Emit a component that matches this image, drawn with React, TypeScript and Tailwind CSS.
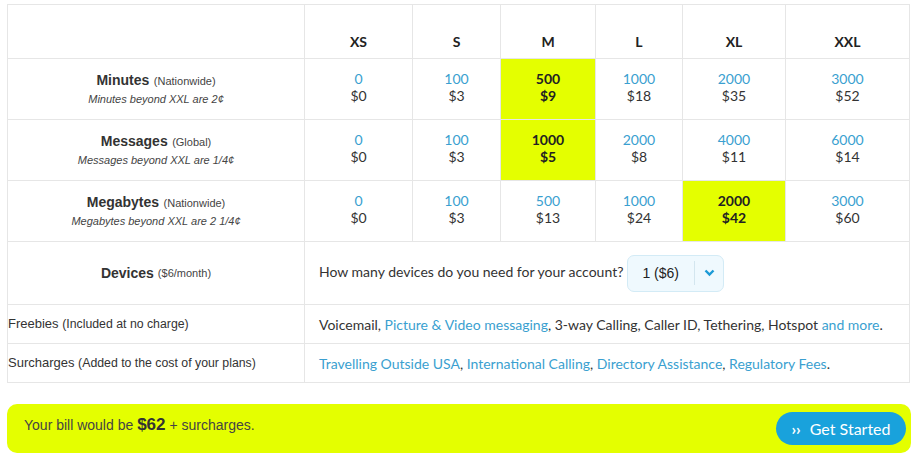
import React from "react";

const SIZES = ["XS", "S", "M", "L", "XL", "XXL"];

type Cell = { qty: string; price: string; on?: boolean };

const ROWS: { label: string; note: string; sub: string; cells: Cell[] }[] = [
  {
    label: "Minutes",
    note: "(Nationwide)",
    sub: "Minutes beyond XXL are 2¢",
    cells: [
      { qty: "0", price: "$0" },
      { qty: "100", price: "$3" },
      { qty: "500", price: "$9", on: true },
      { qty: "1000", price: "$18" },
      { qty: "2000", price: "$35" },
      { qty: "3000", price: "$52" },
    ],
  },
  {
    label: "Messages",
    note: "(Global)",
    sub: "Messages beyond XXL are 1/4¢",
    cells: [
      { qty: "0", price: "$0" },
      { qty: "100", price: "$3" },
      { qty: "1000", price: "$5", on: true },
      { qty: "2000", price: "$8" },
      { qty: "4000", price: "$11" },
      { qty: "6000", price: "$14" },
    ],
  },
  {
    label: "Megabytes",
    note: "(Nationwide)",
    sub: "Megabytes beyond XXL are 2 1/4¢",
    cells: [
      { qty: "0", price: "$0" },
      { qty: "100", price: "$3" },
      { qty: "500", price: "$13" },
      { qty: "1000", price: "$24" },
      { qty: "2000", price: "$42", on: true },
      { qty: "3000", price: "$60" },
    ],
  },
];

const proxima = "font-['Lato','Open_Sans',sans-serif]";
const arial = "font-['Liberation_Sans',Arial,sans-serif]";
const link = "text-[#3a9fd0]";

export default function App() {
  return (
    <div className={`w-[916px] h-[457px] bg-white pl-[7px] pt-[4px] text-[#333] ${arial}`}>
      <div className="w-[903px] border border-[#e6e6e6]">
        <div className="grid grid-cols-[297px_108px_88px_95px_87px_103px_1fr]">
          {/* header row */}
          <div className="h-[54px] border-b border-r border-[#e6e6e6]" />
          {SIZES.map((s, i) => (
            <div
              key={s}
              className={`h-[54px] flex items-end justify-center pb-[6px] border-b border-[#e6e6e6] ${i < 5 ? "border-r" : ""} ${proxima} font-bold text-[14px] text-[#222]`}
            >
              {s}
            </div>
          ))}

          {ROWS.map((row) => (
            <React.Fragment key={row.label}>
              <div className="h-[61px] flex flex-col items-center justify-center border-b border-r border-[#e6e6e6]">
                <div className="leading-[18px]">
                  <span className="font-bold text-[14px] text-[#333]">{row.label}</span>{" "}
                  <span className="text-[11px] text-[#444]">{row.note}</span>
                </div>
                <div className="italic text-[11px] text-[#444] leading-[18px]">{row.sub}</div>
              </div>
              {row.cells.map((c, i) => (
                <div
                  key={i}
                  className={`h-[61px] flex flex-col items-center justify-center pb-[4px] border-b border-[#e6e6e6] ${i < 5 ? "border-r" : ""} ${proxima} text-[14px] leading-[17px] ${c.on ? "bg-[#e4ff00] font-bold text-[#222]" : ""}`}
                >
                  <span className={c.on ? "" : link}>{c.qty}</span>
                  <span>{c.price}</span>
                </div>
              ))}
            </React.Fragment>
          ))}

          {/* devices */}
          <div className="h-[63px] flex items-center justify-center border-b border-r border-[#e6e6e6]">
            <span className="font-bold text-[14px]">Devices</span>
            <span className="text-[11px] text-[#444] ml-[4px]">($6/month)</span>
          </div>
          <div className={`col-span-6 h-[63px] flex items-center pl-[14px] border-b border-[#e6e6e6] ${proxima} text-[14px]`}>
            <span className="-mt-[3px]">How many devices do you need for your account?</span>
            <div className={`ml-[4px] w-[97px] h-[37px] flex items-center rounded-[7px] border border-[#d3ebf6] bg-[#eff9fe] ${arial}`}>
              <span className="flex-1 pl-[14px] text-[14px] text-[#222]">1 ($6)</span>
              <div className="w-[29px] h-[24px] border-l border-[#d3e6ef] flex items-center justify-center">
                <svg width="11" height="8" viewBox="0 0 11 8">
                  <path d="M1.5 1.5 L5.5 5.5 L9.5 1.5" fill="none" stroke="#1b9ad6" strokeWidth="2.4" />
                </svg>
              </div>
            </div>
          </div>

          {/* freebies */}
          <div className="h-[39px] flex items-center border-b border-r border-[#e6e6e6] text-[13px]">
            Freebies&nbsp;<span className="text-[12.3px]">(Included at no charge)</span>
          </div>
          <div className={`col-span-6 h-[39px] flex items-center pl-[14px] border-b border-[#e6e6e6] ${proxima} text-[14px]`}>
            <span>
              Voicemail, <span className={link}>Picture &amp; Video messaging</span>, 3-way Calling, Caller ID, Tethering,
              Hotspot <span className={link}>and more</span>.
            </span>
          </div>

          {/* surcharges */}
          <div className="h-[38px] flex items-center border-r border-[#e6e6e6] text-[13px]">
            Surcharges&nbsp;<span className="text-[12.3px]">(Added to the cost of your plans)</span>
          </div>
          <div className={`col-span-6 h-[38px] flex items-center pl-[14px] ${proxima} text-[14px]`}>
            <span>
              <span className={link}>Travelling Outside USA</span>, <span className={link}>International Calling</span>,{" "}
              <span className={link}>Directory Assistance</span>, <span className={link}>Regulatory Fees</span>.
            </span>
          </div>
        </div>
      </div>

      {/* bill banner */}
      <div className="mt-[21px] w-[904px] h-[49px] rounded-[10px] bg-[#e4ff00] flex items-center justify-between pl-[17px] pr-[5px]">
        <div className="text-[14px] text-[#444] -mt-[8px]">
          Your bill would be <span className="font-bold text-[17px] text-[#333]">$62</span> + surcharges.
        </div>
        <button className={`w-[130px] h-[33px] rounded-full bg-[#19a2dc] text-white flex items-center justify-center gap-[9px] ${proxima}`}>
          <span className="text-[16px] font-bold leading-none mt-[1px]">››</span>
          <span className="text-[16px]">Get Started</span>
        </button>
      </div>
    </div>
  );
}
